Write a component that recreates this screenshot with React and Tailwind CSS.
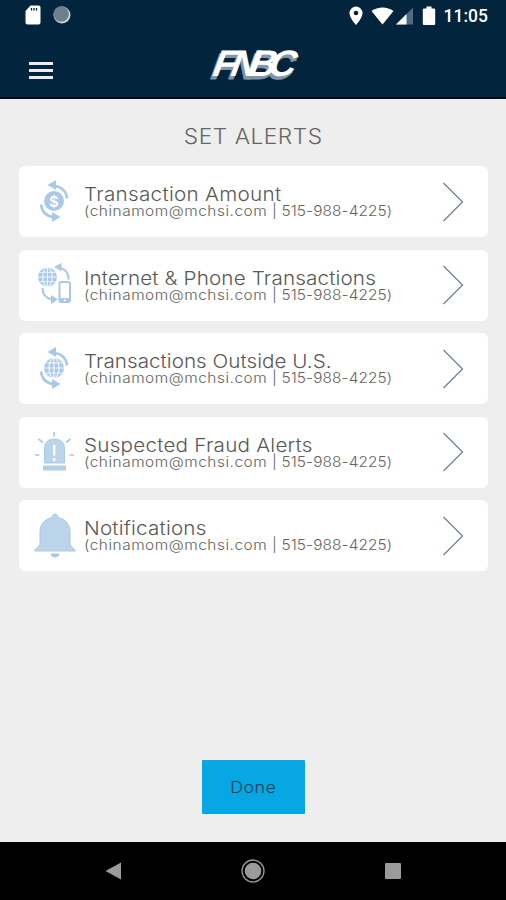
import React from 'react';

const EMAIL = '(chinamom@mchsi.com';
const PHONE = '| 515-988-4225)';

// Curved arrows shared by the amount and outside U.S. icons
function CycleArrows() {
  return (
    <>
      <path d="M20 7C28 7 33.500 12 34 19.500" fill="none" stroke="#a9c9e6" strokeWidth="2.600" />
      <path d="M14.500 6L23 1v10z" fill="#a9c9e6" />
      <path d="M8 25.500c1 8 6 12 13 12.500" fill="none" stroke="#a9c9e6" strokeWidth="2.600" />
      <path d="M27.500 38L19 43V33z" fill="#a9c9e6" />
    </>
  );
}

function Globe({ cx, cy, r }) {
  return (
    <g transform={`translate(${cx} ${cy}) scale(${r / 10})`}>
      <circle r="10" fill="#a9c9e6" />
      <g fill="none" stroke="#f2f7fc" strokeWidth="1.100">
        <path d="M-10 0H10M0-10V10M-8.500-5H8.500M-8.500 5H8.500" />
        <ellipse rx="5" ry="10" />
      </g>
    </g>
  );
}

function AmountIcon() {
  return (
    <>
      <CycleArrows />
      <circle cx="21" cy="22" r="10" fill="#a9c9e6" />
      <text x="21" y="27.500" textAnchor="middle" fontFamily="Inter, sans-serif" fontSize="15" fontWeight="600" fill="#fff">$</text>
    </>
  );
}

function PhoneIcon() {
  return (
    <>
      <Globe cx={14.5} cy={15} r={9.5} />
      <g fill="none" stroke="#a9c9e6" strokeWidth="2">
        <path d="M25 5.500c7 1 10.500 5 10.500 12" />
        <path d="M9.500 26c0 7 4 10.500 10 11.500" />
        <rect x="26.500" y="20" width="10.500" height="20" rx="1.500" />
      </g>
      <path d="M21 5L28.500 1v8.500zM25 37.500L18 42v-9z" fill="#a9c9e6" />
      <path d="M26.500 36H37v4H26.500z" fill="#a9c9e6" />
      <circle cx="31.800" cy="38.300" r="1" fill="#fff" />
    </>
  );
}

function OutsideIcon() {
  return (
    <>
      <CycleArrows />
      <Globe cx={21} cy={22} r={10} />
    </>
  );
}

function FraudIcon() {
  return (
    <>
      <path d="M11.500 34V20C11.500 13.500 15 10 21.500 10S31.500 13.500 31.500 20V34z" fill="#bcd4ea" stroke="#a9c9e6" />
      <path d="M10 36.500h23V41.500H10z" fill="#b2cee8" />
      <path d="M21.200 16v10.500M21.200 29v3" stroke="#fff" strokeWidth="2.300" />
      <g stroke="#a9c9e6" strokeWidth="1.600">
        <path d="M21.200 3v4.500M5.500 10l4.500 3.500M37.500 10L33 13.500M2 26h4.500M36.500 26H41" />
      </g>
    </>
  );
}

function BellIcon() {
  return (
    <>
      <path
        d="M22 1c1.700 0 2.500 1 3 3.500 7 1.500 12 6.500 12 14V31c0 3 5 4.500 5.500 7H1.500c.5-2.500 5.500-4 5.500-7V18.500c0-7.500 5-12.500 12-14C19.500 2 20.300 1 22 1z"
        fill="#bcd4ea"
        stroke="#a9c9e6"
      />
      <path d="M17.500 40.500h9c-.5 3-2.500 4-4.500 4s-4-1-4.500-4z" fill="#a9c9e6" />
    </>
  );
}

const ALERTS = [
  { title: 'Transaction Amount', Icon: AmountIcon, tracking: 'tracking-[0.26px]' },
  { title: 'Internet & Phone Transactions', Icon: PhoneIcon, tracking: 'tracking-[0.13px]' },
  { title: 'Transactions Outside U.S.', Icon: OutsideIcon, tracking: 'tracking-[0.02px]' },
  { title: 'Suspected Fraud Alerts', Icon: FraudIcon, tracking: 'tracking-[0.2px]' },
  { title: 'Notifications', Icon: BellIcon, tracking: 'tracking-[0.18px]' },
];

function StatusBar() {
  return (
    <div className="flex h-8 items-center justify-between pl-[25px] pr-[18px]">
      <div className="-mt-[2px] flex items-center gap-[12px]">
        <svg width="16" height="20" viewBox="0 0 16 20">
          <path d="M5.500.5h8a2 2 0 0 1 2 2v15a2 2 0 0 1-2 2h-11a2 2 0 0 1-2-2V6z" fill="#fff" />
          <path d="M6.500 3v2.500M9 3v2.500M11.500 3v2.500" stroke="#02243c" strokeWidth="1.300" />
        </svg>
        <svg width="18" height="18" viewBox="0 0 18 18">
          <circle cx="9" cy="9" r="8.500" fill="#c9d4dc" />
          <circle cx="8.200" cy="8" r="7.700" fill="#6d7f8f" />
        </svg>
      </div>
      <div className="flex items-center">
        <svg width="93" height="20" viewBox="0 0 93 20" className="-mt-[1px]">
          <path d="M7 .5a6.500 6.500 0 0 0-6.500 6.500C.5 12 7 19 7 19s6.500-7 6.500-12A6.500 6.500 0 0 0 7 .5z" fill="#fff" />
          <circle cx="7" cy="7" r="2.300" fill="#02243c" />
          <path d="M22.500 5C29 .2 38 .2 44.500 5L33.500 18.500z" fill="#fff" />
          <path d="M47 18.500L64 1.500v17z" fill="#506b80" />
          <path d="M47 18.500L57.500 8v10.500z" fill="#fff" />
          <path d="M75 2.500h2.500V.5h5v2H85a1.200 1.200 0 0 1 1.200 1.200v14.100a1.200 1.200 0 0 1-1.200 1.200H75a1.200 1.200 0 0 1-1.200-1.200V3.700A1.200 1.200 0 0 1 75 2.500z" fill="#fff" />
        </svg>
        <span className="ml-[2px] mt-[1px] font-['Roboto',sans-serif] text-[17.500px] font-medium leading-none text-white">11:05</span>
      </div>
    </div>
  );
}

// The B sits on the right stem of the N, so the letters are placed one by one
function Logo() {
  return (
    <svg width="100" height="52" viewBox="0 0 100 52" className="justify-self-center">
      <g fontFamily="'Liberation Sans', sans-serif" fontWeight="700" fontSize="37" strokeLinejoin="round">
        <text transform="translate(5 40) skewX(-20)" x="0 18 36 56" fill="#8495a7" stroke="#8495a7" strokeWidth=".8">FNBC</text>
        <text transform="translate(7 37) skewX(-20)" x="0 18 36 56" fill="#fff">FNBC</text>
      </g>
    </svg>
  );
}

function Header() {
  return (
    <header className="h-[99px] border-b-2 border-[#020b1c] bg-[#02243c]">
      <StatusBar />
      <div className="grid grid-cols-3 items-start pt-[7px]">
        <button aria-label="Menu" className="ml-[29px] mt-[23px] flex w-6 flex-col gap-[4px]">
          <span className="h-[3px] w-full bg-[#f2eaf3]" />
          <span className="h-[3px] w-full bg-[#f2eaf3]" />
          <span className="h-[3px] w-full bg-[#f2eaf3]" />
        </button>
        <Logo />
      </div>
    </header>
  );
}

function AlertRow({ title, Icon, tracking }) {
  return (
    <li className="flex h-[71px] items-center rounded-md bg-white pl-[14px] pr-[24px]">
      <svg width="44" height="46" viewBox="0 0 44 46" className="shrink-0">
        <Icon />
      </svg>
      <div className="ml-[7px] flex-1 origin-left scale-x-[1.1] whitespace-nowrap pt-[1px]">
        <p className={`text-[18.800px] leading-[18px] text-[#585858] ${tracking}`}>{title}</p>
        <p className="text-[14px] leading-[14px] text-[#626262]">
          <span className="tracking-[0.48px]">{EMAIL} </span>
          <span className="tracking-[0.1px]">{PHONE}</span>
        </p>
      </div>
      <svg width="22" height="40" viewBox="0 0 22 40" className="shrink-0">
        <path d="M1.500 1L20.500 20L1.500 39" fill="none" stroke="#70819c" strokeWidth="1.300" />
      </svg>
    </li>
  );
}

function NavBar() {
  return (
    <nav className="flex h-[58px] items-center justify-between bg-black px-[105px]">
      <svg width="17" height="18" viewBox="0 0 17 18">
        <path d="M.5 9L16 .5v17z" fill="#9b9b9b" />
      </svg>
      <svg width="24" height="24" viewBox="0 0 24 24" className="-ml-px">
        <circle cx="12" cy="12" r="11" fill="none" stroke="#999" strokeWidth="1.300" />
        <circle cx="12" cy="12" r="8.300" fill="#9b9b9b" />
      </svg>
      <div className="h-4 w-4 rounded-[1px] bg-[#9b9b9b]" />
    </nav>
  );
}

function App() {
  return (
    <div className="flex h-[900px] w-[506px] flex-col overflow-hidden bg-[#eee] font-['Inter',sans-serif] font-light">
      <Header />
      <main className="flex flex-1 flex-col items-center">
        <h1 className="mt-[26px] scale-x-[1.08] text-[21px] leading-[24px] tracking-[0.5px] text-[#666]">SET ALERTS</h1>
        <ul className="ml-px mt-[17px] flex w-[469px] flex-col gap-[12.500px]">
          {ALERTS.map((a) => (
            <AlertRow key={a.title} {...a} />
          ))}
        </ul>
        <button className="mb-[28px] mt-auto h-[54px] w-[103px] rounded-[1px] bg-[#06a7e2] pt-px text-[16.500px] text-[#073c57]">
          <span className="inline-block scale-x-[1.08] tracking-[0.4px]">Done</span>
        </button>
      </main>
      <NavBar />
    </div>
  );
}

export default App;
